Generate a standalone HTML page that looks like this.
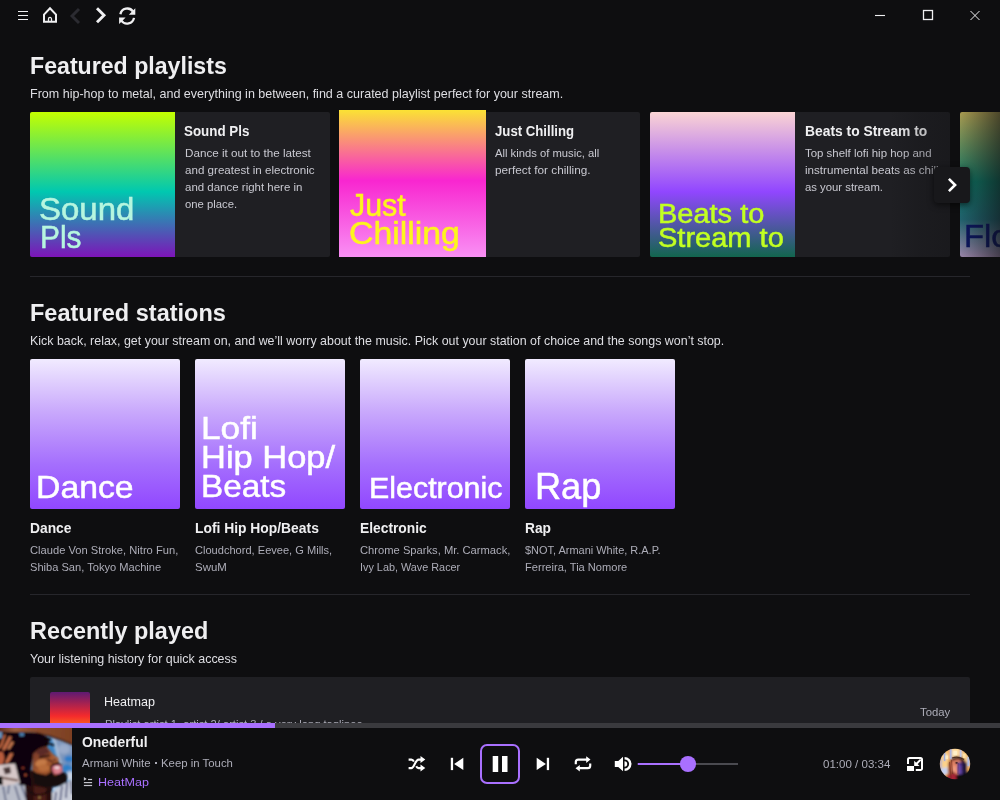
<!DOCTYPE html>
<html>
<head>
<meta charset="utf-8">
<title>Soundtrack</title>
<style>
*{box-sizing:border-box;margin:0;padding:0}
html,body{width:1000px;height:800px;overflow:hidden;background:#0e0e10;}
body{font-family:"Liberation Sans",sans-serif;color:#efeff1;position:relative}
.abs{position:absolute}
.tx{position:absolute;white-space:nowrap;line-height:1;transform-origin:0 0;font-family:"Liberation Sans",sans-serif}
.bg{-webkit-text-stroke:0.5px currentColor}
.sep{position:absolute;left:30px;width:940px;height:1px;background:#26262b}
.card{position:absolute;top:112px;width:300px;height:145px;background:#1f1f23;border-radius:2px}
.img{position:absolute;border-radius:2px 0 0 2px}
.st{position:absolute;top:359px;width:150px;height:150px;border-radius:2px;background:linear-gradient(180deg,#f1ebff 0%,#c9a9fc 35%,#a56ffd 70%,#9147ff 100%)}
</style>
</head>
<body>

<!-- top bar icons -->
<svg class="abs" style="left:0;top:0" width="1000" height="32" viewBox="0 0 1000 32" fill="none" stroke="#efeff1">
  <g stroke-width="1.2"><path d="M18 11.5h10M18 15.5h10M18 19.5h10"/></g>
  <path d="M44 21.8 V14.6 L50 8.2 L56 14.6 V21.8 Z" stroke-width="2" stroke-linejoin="miter"/>
  <path d="M48.500 21.800 V18.900 a1.500 1.500 0 0 1 3 0 V21.800" stroke-width="1.300"/>
  <path d="M79 8.900 L72 15.950 L79 23" stroke="#2b2b31" stroke-width="2.900"/>
  <path d="M97 8.200 L104 15.250 L97 22.300" stroke-width="2.900"/>
  <g stroke-width="2.300">
   <path d="M120.400 14.300 A7 7 0 0 1 133 11.500"/>
   <path d="M134 17.900 A7 7 0 0 1 121.400 20.700"/>
  </g>
  <path d="M135.300 8.300 V14.800 H128.800 Z M119.100 23.900 V17.400 H125.600 Z" fill="#efeff1" stroke="none"/>
  <g stroke-width="1.100">
  <path d="M875 15.500h10"/>
  <rect x="923.500" y="10.500" width="9" height="9" stroke-width="1.300"/>
  <path d="M970.500 11l9 9M979.500 11l-9 9" stroke-width="1"/>
  </g>
</svg>

<!-- Featured playlists cards -->
<div class="card" style="left:30px"></div>
<div class="img" style="left:30px;top:112px;width:145px;height:145px;background:linear-gradient(180deg,#c4ff00 0%,#00c8b0 55%,#7d14b8 100%)"></div>
<div class="card" style="left:340px"></div>
<div class="img" style="left:339px;top:110px;width:147px;height:147px;border-radius:0;background:linear-gradient(180deg,#fbe234 0%,#f826d0 48%,#f990f4 100%)"></div>
<div class="card" style="left:650px"></div>
<div class="img" style="left:650px;top:112px;width:145px;height:145px;background:linear-gradient(180deg,#fbd4d4 0%,#9146ff 55%,#12664e 100%)"></div>
<div class="img" style="left:960px;top:112px;width:40px;height:145px;background:linear-gradient(180deg,#ffe974 0%,#11a78d 48%,#2a90a0 74%,#e9c8ff 100%)"></div>
<div class="tx bg" style="left:963.800px;top:221.100px;font-size:31px;color:#0a1a8c;transform:scaleX(1.06)">Flo</div>

<!-- stations -->
<div class="st" style="left:30px"></div>
<div class="st" style="left:195px"></div>
<div class="st" style="left:360px"></div>
<div class="st" style="left:525px"></div>

<div class="sep" style="top:276px"></div>
<div class="sep" style="top:594px"></div>

<!-- recently played card -->
<div class="abs" style="left:30px;top:677px;width:940px;height:60px;background:#1f1f23;border-radius:2px 2px 0 0"></div>
<div class="abs" style="left:50px;top:692px;width:40px;height:40px;border-radius:2px;background:linear-gradient(180deg,#5e1a72 0%,#f42a2c 60%,#ff8a14 100%)"></div>

<div class="tx" style="left:29.89px;top:55.10px;font-size:23px;font-weight:bold;color:#efeff1;transform:scaleX(1.0063)">Featured playlists</div>
<div class="tx" style="left:29.87px;top:87.40px;font-size:13px;color:#dedee3;transform:scaleX(0.9634)">From hip-hop to metal, and everything in between, find a curated playlist perfect for your stream.</div>
<div class="tx" style="left:183.85px;top:123.80px;font-size:14.5px;font-weight:bold;color:#efeff1;transform:scaleX(0.9219)">Sound Pls</div>
<div class="tx" style="left:184.62px;top:147.90px;font-size:11.3px;color:#c9c9d1;transform:scaleX(1.0330)">Dance it out to the latest</div>
<div class="tx" style="left:184.53px;top:164.90px;font-size:11.3px;color:#c9c9d1;transform:scaleX(1.0264)">and greatest in electronic</div>
<div class="tx" style="left:184.53px;top:181.80px;font-size:11.3px;color:#c9c9d1;transform:scaleX(1.0162)">and dance right here in</div>
<div class="tx" style="left:184.53px;top:198.80px;font-size:11.3px;color:#c9c9d1;transform:scaleX(1.0012)">one place.</div>
<div class="tx" style="left:494.69px;top:123.80px;font-size:14.5px;font-weight:bold;color:#efeff1;transform:scaleX(0.9091)">Just Chilling</div>
<div class="tx" style="left:495.23px;top:147.90px;font-size:11.3px;color:#c9c9d1;transform:scaleX(0.9947)">All kinds of music, all</div>
<div class="tx" style="left:494.68px;top:164.90px;font-size:11.3px;color:#c9c9d1;transform:scaleX(1.0423)">perfect for chilling.</div>
<div class="tx" style="left:804.70px;top:123.80px;font-size:14.5px;font-weight:bold;color:#efeff1;transform:scaleX(0.9547)">Beats to Stream to</div>
<div class="tx" style="left:805.35px;top:147.90px;font-size:11.3px;color:#c9c9d1;transform:scaleX(1.0123)">Top shelf lofi hip hop and</div>
<div class="tx" style="left:804.71px;top:164.90px;font-size:11.3px;color:#c9c9d1;transform:scaleX(1.0287)">instrumental beats as chill</div>
<div class="tx" style="left:804.72px;top:181.80px;font-size:11.3px;color:#c9c9d1;transform:scaleX(1.0015)">as your stream.</div>
<div class="tx" style="left:29.80px;top:302.10px;font-size:23px;font-weight:bold;color:#efeff1;transform:scaleX(1.0215)">Featured stations</div>
<div class="tx" style="left:29.90px;top:334.30px;font-size:13px;color:#dedee3;transform:scaleX(0.9560)">Kick back, relax, get your stream on, and we’ll worry about the music. Pick out your station of choice and the songs won’t stop.</div>
<div class="tx" style="left:29.81px;top:520.80px;font-size:14.5px;font-weight:bold;color:#efeff1;transform:scaleX(0.9533)">Dance</div>
<div class="tx" style="left:194.79px;top:520.80px;font-size:14.5px;font-weight:bold;color:#efeff1;transform:scaleX(0.9548)">Lofi Hip Hop/Beats</div>
<div class="tx" style="left:359.79px;top:520.80px;font-size:14.5px;font-weight:bold;color:#efeff1;transform:scaleX(0.9520)">Electronic</div>
<div class="tx" style="left:524.78px;top:520.80px;font-size:14.5px;font-weight:bold;color:#efeff1;transform:scaleX(0.9481)">Rap</div>
<div class="tx" style="left:29.52px;top:545.10px;font-size:11.3px;color:#adadb8;transform:scaleX(0.9878)">Claude Von Stroke, Nitro Fun,</div>
<div class="tx" style="left:29.63px;top:561.80px;font-size:11.3px;color:#adadb8;transform:scaleX(0.9822)">Shiba San, Tokyo Machine</div>
<div class="tx" style="left:194.55px;top:545.10px;font-size:11.3px;color:#adadb8;transform:scaleX(0.9796)">Cloudchord, Eevee, G Mills,</div>
<div class="tx" style="left:194.61px;top:561.80px;font-size:11.3px;color:#adadb8;transform:scaleX(1.0121)">SwuM</div>
<div class="tx" style="left:359.73px;top:545.10px;font-size:11.3px;color:#adadb8;transform:scaleX(0.9898)">Chrome Sparks, Mr. Carmack,</div>
<div class="tx" style="left:359.62px;top:561.80px;font-size:11.3px;color:#adadb8;transform:scaleX(0.9594)">Ivy Lab, Wave Racer</div>
<div class="tx" style="left:525.02px;top:545.10px;font-size:11.3px;color:#adadb8;transform:scaleX(0.9698)">$NOT, Armani White, R.A.P.</div>
<div class="tx" style="left:524.82px;top:561.80px;font-size:11.3px;color:#adadb8;transform:scaleX(0.9814)">Ferreira, Tia Nomore</div>
<div class="tx" style="left:30.08px;top:620.10px;font-size:23px;font-weight:bold;color:#efeff1;transform:scaleX(1.0176)">Recently played</div>
<div class="tx" style="left:30.42px;top:652.20px;font-size:13px;color:#dedee3;transform:scaleX(0.9569)">Your listening history for quick access</div>
<div class="tx" style="left:104.39px;top:696.00px;font-size:12.6px;color:#efeff1;transform:scaleX(0.9980)">Heatmap</div>
<div class="tx" style="left:104.61px;top:718.90px;font-size:11.3px;color:#adadb8;transform:scaleX(0.9886)">Playlist artist 1, artist 2/ artist 3 / a very long taglinee</div>
<div class="tx" style="left:919.54px;top:707.20px;font-size:11.3px;color:#adadb8;transform:scaleX(1.0020)">Today</div>
<div class="tx bg" style="left:38.93px;top:192.70px;font-size:32px;color:#b6f6df;transform:scaleX(1.0300)">Sound</div>
<div class="tx bg" style="left:39.58px;top:220.80px;font-size:32px;color:#b6f6df;transform:scaleX(0.9320)">Pls</div>
<div class="tx bg" style="left:349.61px;top:189.50px;font-size:31.5px;color:#fdf51c;transform:scaleX(0.9655)">Just</div>
<div class="tx bg" style="left:348.57px;top:217.90px;font-size:31.5px;color:#fdf51c;transform:scaleX(1.0733)">Chilling</div>
<div class="tx bg" style="left:657.75px;top:199.90px;font-size:27.5px;color:#c2ff22;transform:scaleX(1.0539)">Beats to</div>
<div class="tx bg" style="left:657.81px;top:223.90px;font-size:27.5px;color:#c2ff22;transform:scaleX(1.0552)">Stream to</div>
<div class="tx bg" style="left:35.70px;top:471.30px;font-size:32px;color:#fff;transform:scaleX(1.0548)">Dance</div>
<div class="tx bg" style="left:200.67px;top:411.90px;font-size:32px;color:#fff;transform:scaleX(1.0997)">Lofi</div>
<div class="tx bg" style="left:200.83px;top:441.00px;font-size:32px;color:#fff;transform:scaleX(1.0773)">Hip Hop/</div>
<div class="tx bg" style="left:201.16px;top:470.30px;font-size:32px;color:#fff;transform:scaleX(1.0415)">Beats</div>
<div class="tx bg" style="left:368.89px;top:474.10px;font-size:29px;color:#fff;transform:scaleX(1.0482)">Electronic</div>
<div class="tx bg" style="left:534.64px;top:468.90px;font-size:36.3px;color:#fff;transform:scaleX(0.9966)">Rap</div>

<!-- right fade -->
<div class="abs" style="left:890px;top:108px;width:110px;height:152px;background:linear-gradient(90deg,rgba(14,14,16,0) 0%,rgba(14,14,16,.2) 27%,rgba(14,14,16,.31) 55%,rgba(14,14,16,.36) 64%,rgba(14,14,16,.74) 100%)"></div>
<!-- next button -->
<div class="abs" style="left:934px;top:167px;width:36px;height:36px;border-radius:4px;background:#18181b;box-shadow:0 2px 6px rgba(0,0,0,.6)">
  <svg width="36" height="36" viewBox="0 0 36 36" fill="none" stroke="#fff" stroke-width="2.600"><path d="M14.900 11.800 L21.100 18 L14.900 24.200"/></svg>
</div>

<!-- Player bar -->
<div class="abs" style="left:0;top:723px;width:1000px;height:77px;background:#0e0e10"></div>
<div class="abs" style="left:0;top:723px;width:1000px;height:5px;background:#3a3a3e"></div>
<div class="abs" style="left:0;top:723px;width:275px;height:5px;background:#a970ff"></div>

<svg id="art" class="abs" style="left:0;top:728px" width="72" height="72" viewBox="0 0 72 72">
  <defs>
    <filter id="b1" x="-10%" y="-10%" width="120%" height="120%"><feGaussianBlur stdDeviation="0.800"/></filter>
    <filter id="b2" x="-10%" y="-10%" width="120%" height="120%"><feGaussianBlur stdDeviation="1.500"/></filter>
    <clipPath id="ac"><rect width="72" height="72"/></clipPath>
    <linearGradient id="arm" x1="0" x2="1"><stop offset="0" stop-color="#5c2a1e"/><stop offset=".22" stop-color="#9c6042"/><stop offset=".45" stop-color="#8a4c2e"/><stop offset="1" stop-color="#7c4022"/></linearGradient>
    <linearGradient id="fc" x1="0" x2="1" y1="0" y2="1"><stop offset="0" stop-color="#6a3026"/><stop offset=".5" stop-color="#a4582f"/><stop offset="1" stop-color="#8a4624"/></linearGradient>
  </defs>
  <g clip-path="url(#ac)">
  <rect width="72" height="72" fill="#3a84c6"/>
  <g filter="url(#b2)">
    <path d="M52 8 L74 16 L74 40 L62 40 L56 26 Z" fill="#7d96bc"/>
    <ellipse cx="64" cy="21" rx="6" ry="5" fill="#9aaccb"/>
    <path d="M52 9 L54.500 9 L61.500 38 L59.500 38 Z" fill="#b9c9e0"/>
    <ellipse cx="69" cy="31" rx="5" ry="3.500" fill="#2c7cc8"/>
    <ellipse cx="47" cy="13" rx="4" ry="5" fill="#4f97d6"/>
    <ellipse cx="70" cy="48" rx="4" ry="5.500" fill="#c9d3e4"/>
    <ellipse cx="57" cy="61" rx="5.500" ry="3.500" fill="#b3cbe4"/>
    <ellipse cx="67" cy="40" rx="5" ry="4" fill="#2d80c8"/>
  </g>
  <g filter="url(#b1)">
    <!-- shirt -->
    <path d="M-2 57 L26 55 L30 74 L-2 74 Z" fill="#b9bdc9"/>
    <path d="M50 66 L60 58 L74 50 L74 74 L50 74 Z" fill="#c9cdd9"/>
    <path d="M3 58 L6 74 M9 57 L8 66 M15 58 L20 74 M21 57 L26 70" stroke="#5a6282" stroke-width="1.500"/>
    <path d="M56 64 L55 74 M62 58 L60 74 M67 54 L66 70 M71 53 L72 66" stroke="#3c4470" stroke-width="1.500"/>
    <!-- neck -->
    <path d="M24 40 L36 44 L52 56 L52 74 L26 74 Z" fill="#2a0e0c"/>
    <path d="M34 58 L46 60 L46 74 L34 74 Z" fill="#4a1c14"/>
    <path d="M28 62 Q38 72 50 62" stroke="#0a0608" stroke-width="1.200" fill="none"/>
    <circle cx="39.500" cy="69.500" r="1" fill="#c8a860"/>
    <!-- top arm -->
    <path d="M-2 -2 H74 V17 L62 12 L50 8 L38 5 L24 4 L12 5 L-2 5 Z" fill="url(#arm)"/>
    <path d="M36 5 L50 8 L62 12 L74 17" stroke="#4a2014" stroke-width="1.600" fill="none"/>
    <!-- dark behind hands / hair -->
    <path d="M-2 4 L24 4 L40 5 L50 11 L47 19 L40 22 L33 30 L30 44 L32 58 L19 57 L15 36 L-2 38 Z" fill="#0a0607"/>
    <path d="M44 11 Q48 10.500 51 12 M45 16 Q50 15 54 17.500" stroke="#0a0607" stroke-width="1.700" fill="none"/>
    <path d="M19 5 L24 5 L24 8 L20 8.500 Z" fill="#4a7cac"/>
    <path d="M-2 4 L2 4 L2 10 L-2 11 Z" fill="#6a92ba"/>
    <!-- fingers -->
    <path d="M-2 18 L0 17 L4 6 L6 7 L2.500 18 L-2 22 Z" fill="#b8603e"/>
    <path d="M2 21 L9 8 L12 9 L6 21 L3 23 Z" fill="#c06844"/>
    <path d="M7 21 L11.500 13 L14 14.500 L9.500 21.500 Z" fill="#c87850"/>
    <path d="M-2 24 L3 24 L4.500 30 L3 36 L-2 37 Z" fill="#b85c3c"/>
    <path d="M5 34 L10 25 L13.500 25.500 L9 34 L6 36 Z" fill="#c46c48"/>
    <!-- card -->
    <path d="M-2 37 L15 35.500 L20 55 L4 58 L-2 57 Z" fill="#d6c8c8"/>
    <path d="M3 40 L10 38.500 L11 45 L5 46.500 Z" fill="#4a3838"/>
    <path d="M-2 49 L18 52.500" stroke="#6a4a40" stroke-width="2.200"/>
    <path d="M-2 48 L2 48 L3 57 L-2 57 Z" fill="#0c0808"/>
    <!-- ear highlights -->
    <ellipse cx="23" cy="40" rx="0.900" ry="1.100" fill="#c85436"/>
    <ellipse cx="25.500" cy="47" rx="1.200" ry="0.900" fill="#d45e3c"/>
    <!-- face -->
    <path d="M33 26 Q40 18 47 19 L53 26 L58 30 L59 35 L62 46 L52 50 L40 48 L32 42 Z" fill="url(#fc)"/>
    <path d="M36 24 Q42 19 47 20 L50 25 L40 28 Z" fill="#5a2a28"/>
    <ellipse cx="41" cy="35" rx="6" ry="3.500" fill="#c47a46" transform="rotate(-14 41 35)"/>
    <ellipse cx="44" cy="40" rx="6" ry="3.500" fill="#b86c3a"/>
    <path d="M39 29.500 L50 27.500" stroke="#1a0a0a" stroke-width="1.800"/>
    <path d="M47 31 L53 34" stroke="#2a1010" stroke-width="1.300"/>
    <ellipse cx="55.500" cy="31" rx="3" ry="2.200" fill="#b46a44"/>
    <ellipse cx="54.800" cy="31.600" rx="1.500" ry="0.900" fill="#160808"/>
    <!-- beard -->
    <path d="M32 42 L37 45 L46 47 L51 44 L50 39 L53 35.500 L58 34.500 L60 36 L52 42 L55 48 L59 45 L64 44 L67 47 L67 54 L60 58 L46 60 L34 56 Z" fill="#170a0c"/>
    <!-- mouth -->
    <path d="M52 38 L57 36 L62 38 L63 43 L59 46 L54 46 L52 42 Z" fill="#cc6676"/>
    <ellipse cx="57.500" cy="43" rx="3.300" ry="2" fill="#dc8490"/>
    <ellipse cx="57" cy="39.700" rx="3" ry="1.100" fill="#f8f0f0"/>
    <path d="M51.500 38 Q57 34.500 62 37.500" stroke="#200c0c" stroke-width="1.500" fill="none"/>
  </g>
  </g>
</svg>

<div class="tx" style="left:81.89px;top:734.90px;font-size:14px;font-weight:bold;color:#efeff1;transform:scaleX(0.9917)">Onederful</div>
<div class="tx" style="left:81.84px;top:758.00px;font-size:11.3px;color:#adadb8;transform:scaleX(1.0127)">Armani White</div>
<div class="tx" style="left:161.39px;top:758.00px;font-size:11.3px;color:#adadb8;transform:scaleX(1.0071)">Keep in Touch</div>
<div class="tx" style="left:98.00px;top:777.00px;font-size:11.8px;color:#a970ff;transform:scaleX(1.0645)">HeatMap</div>
<div class="tx" style="left:822.76px;top:759.10px;font-size:11.3px;color:#adadb8;transform:scaleX(1.0210)">01:00 / 03:34</div>
<div class="abs" style="left:155px;top:762px;width:2px;height:2px;background:#adadb8"></div>
<svg class="abs" style="left:80px;top:774px" width="16" height="16" viewBox="80 774 16 16">
  <path d="M83.900 777 L86.700 778.900 L83.900 780.800 Z" fill="#c4c4cc"/>
  <rect x="88" y="778.900" width="4.100" height="1.200" fill="#c4c4cc"/>
  <rect x="83.900" y="782" width="8.200" height="1.200" fill="#c4c4cc"/>
  <rect x="83.900" y="784.900" width="8.200" height="1.200" fill="#c4c4cc"/>
</svg>


<svg class="abs" style="left:400px;top:740px" width="600" height="50" viewBox="400 740 600 50" fill="none">
  <!-- shuffle -->
  <g stroke="#fff" stroke-width="2.100">
    <path d="M408.600 768.100 H411.300 C414.300 768.100 415.300 759.600 418.600 759.600 H422"/>
    <path d="M408.600 759.600 H411.300 Q413 759.600 413.900 761.700"/>
    <path d="M416.200 766.200 Q417.200 768.100 418.600 768.100 H422"/>
  </g>
  <path d="M420.500 756.100 L425.300 759.600 L420.500 763.100 Z M420.500 764.600 L425.300 768.100 L420.500 771.600 Z" fill="#fff"/>
  <!-- prev -->
  <rect x="450.800" y="757.800" width="2.300" height="12.300" fill="#fff"/>
  <path d="M463.300 757.800 L454.100 763.950 L463.300 770.100 Z" fill="#fff"/>
  <!-- pause -->
  <rect x="481" y="745" width="38" height="38" rx="6" stroke="#a970ff" stroke-width="2"/>
  <rect x="492.700" y="756" width="5.500" height="16" fill="#fff"/>
  <rect x="502" y="756" width="5.500" height="16" fill="#fff"/>
  <!-- next -->
  <path d="M536.700 757.800 L545.900 763.950 L536.700 770.100 Z" fill="#fff"/>
  <rect x="546.800" y="757.800" width="2.300" height="12.300" fill="#fff"/>
  <!-- repeat -->
  <g stroke="#fff" stroke-width="2.200">
    <path d="M575.800 764.200 V762.100 a2.500 2.500 0 0 1 2.500 -2.500 H587"/>
    <path d="M590.200 763.600 V765.700 a2.500 2.500 0 0 1 -2.500 2.500 H579"/>
  </g>
  <path d="M586.200 756.300 L590.500 759.600 L586.200 762.900 Z M579.800 764.900 L575.500 768.200 L579.800 771.500 Z" fill="#fff"/>
  <!-- volume -->
  <path d="M614.800 761 H618.300 L623 756.700 V771.300 L618.300 767 H614.800 Z" fill="#fff"/>
  <path d="M624.500 761.300 A2.700 2.700 0 0 1 624.500 766.700 Z" fill="#fff"/>
  <path d="M624.600 758.300 A5.700 5.700 0 0 1 624.600 769.700" stroke="#fff" stroke-width="2.400"/>
  <!-- slider -->
  <rect x="637.800" y="763" width="100.200" height="2" fill="#4a4a50"/>
  <rect x="637.800" y="763" width="50" height="2" fill="#a970ff"/>
  <circle cx="688" cy="764" r="8.100" fill="#a970ff"/>
  <!-- pip -->
  <path d="M908 764 V759.500 a1.500 1.500 0 0 1 1.500 -1.500 H920.500 a1.500 1.500 0 0 1 1.500 1.500 V768.500 a1.500 1.500 0 0 1 -1.500 1.500 H915.800" stroke="#fff" stroke-width="2"/>
  <rect x="907" y="766" width="7" height="5" fill="#fff"/>
  <path d="M914.200 760.700 V766 H919.500 Z" fill="#fff"/>
  <path d="M916.300 764 L920.700 759.600" stroke="#fff" stroke-width="2"/>
</svg>

<svg id="avatar" class="abs" style="left:939px;top:748px" width="32" height="32" viewBox="0 0 32 32">
  <defs>
    <filter id="b3" x="-20%" y="-20%" width="140%" height="140%"><feGaussianBlur stdDeviation="0.800"/></filter>
    <clipPath id="avc"><circle cx="16" cy="16" r="15.200"/></clipPath>
  </defs>
  <g clip-path="url(#avc)">
    <g filter="url(#b3)">
      <rect x="-4" y="-4" width="40" height="40" fill="#f2ad56"/>
      <rect x="2" y="4" width="7" height="17" fill="#fdd28a"/>
      <rect x="12.500" y="0" width="8" height="10" fill="#ffdc9c"/>
      <rect x="23" y="4" width="5" height="12" fill="#fbcf86"/>
      <rect x="6" y="7" width="3" height="4" fill="#fff0c8"/>
      <rect x="14" y="3" width="4" height="4" fill="#fff2cc"/>
      <rect x="5" y="5" width="1.300" height="8" fill="#8ea6ea"/>
      <rect x="11" y="1" width="1.600" height="10" fill="#a4b8f0"/>
      <rect x="21" y="2" width="1.600" height="7.500" fill="#b4c6f4"/>
      <rect x="28.500" y="8.500" width="2" height="10" fill="#a8c0f0"/>
      <rect x="1" y="11" width="1.500" height="11" fill="#90a8e8"/>
      <path d="M1 21 L8 19 L9 25 L4 28 Z" fill="#c4d2f4"/>
      <!-- hair -->
      <path d="M9 17 Q11 9 19 8.500 Q27 9 27.500 18 L28 34 L9 34 Z" fill="#5e281e"/>
      <path d="M9 17 Q10.500 12 14 10.500 L13 30 L9 30 Z" fill="#a04e34"/>
      <path d="M13 10 Q19 7 25 11 L24 13 L14 12 Z" fill="#3a1812"/>
      <!-- face -->
      <path d="M12.500 14.500 Q15 11 20 11.500 L23 14 L23 23 L18 27 L13 23 Z" fill="#e38466"/>
      <path d="M13.500 18 Q16 17 17.500 20 L17 25 L14 23 Z" fill="#f09c80"/>
      <path d="M19 14.500 L24 14 L26 20 L24 27 L19.500 27 L18.500 21 Z" fill="#6444a6"/>
      <path d="M22.500 13 L28 15 L28 29 L23 28 Z" fill="#231640"/>
      <ellipse cx="17.600" cy="14.800" rx="1.300" ry="0.900" fill="#24101c"/>
      <ellipse cx="21.500" cy="15.800" rx="1.100" ry="0.800" fill="#1c1030"/>
      <!-- bottom -->
      <path d="M8 27 L17 25.500 L19 36 L6 36 Z" fill="#a62234"/>
      <path d="M17 27 L24 26 L36 20 L36 36 L18 36 Z" fill="#0d0910"/>
    </g>
    <g opacity="0.750">
      <rect x="5" y="5" width="1.200" height="8" fill="#8ea6ea"/>
      <rect x="11" y="1" width="1.400" height="10" fill="#a4b8f0"/>
      <rect x="21" y="2" width="1.400" height="7" fill="#b4c6f4"/>
      <rect x="28.600" y="9" width="1.600" height="9" fill="#a8c0f0"/>
      <rect x="6.500" y="7.500" width="2.500" height="3.500" fill="#fff0c8"/>
      <rect x="14.500" y="3" width="3.500" height="4" fill="#fff2cc"/>
      <rect x="24" y="6" width="2.500" height="4" fill="#ffe6b0"/>
      <ellipse cx="17.600" cy="14.800" rx="1.200" ry="0.900" fill="#24101c"/>
      <path d="M10.500 14 L12 30 M12.500 12 L13.500 26" stroke="#6a2c20" stroke-width="0.700" fill="none"/>
      <path d="M13 10 Q19 7.500 25 11.500" stroke="#32140e" stroke-width="1.200" fill="none"/>
      <path d="M19.200 15 L19 26" stroke="#3a2468" stroke-width="0.800"/>
    </g>
  </g>
</svg>

</body>
</html>
